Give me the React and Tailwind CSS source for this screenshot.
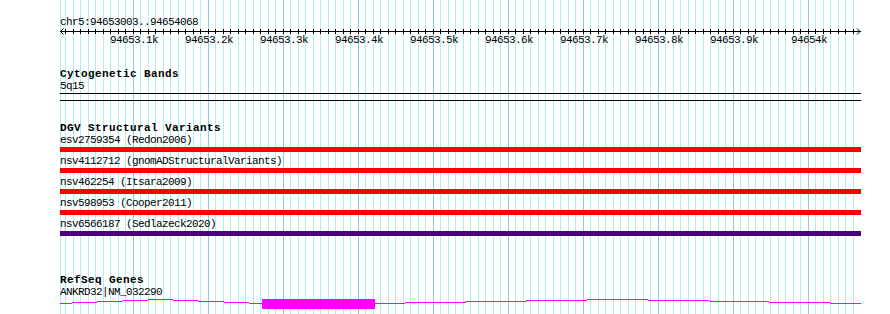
import React from 'react';

const START = 94653003;
const END = 94654068;
const LEFT = 60;
const WIDTH = 801;
const toX = bp => Math.round(LEFT + (bp - START) * 0.75);

const gridLines = [];
for (let bp = 94653010; bp <= 94654060; bp += 10) {
    gridLines.push({ x: toX(bp), major: bp % 100 === 0 });
}

const majorLabels = [
    { bp: 94653100, text: '94653.1k' },
    { bp: 94653200, text: '94653.2k' },
    { bp: 94653300, text: '94653.3k' },
    { bp: 94653400, text: '94653.4k' },
    { bp: 94653500, text: '94653.5k' },
    { bp: 94653600, text: '94653.6k' },
    { bp: 94653700, text: '94653.7k' },
    { bp: 94653800, text: '94653.8k' },
    { bp: 94653900, text: '94653.9k' },
    { bp: 94654000, text: '94654k' },
];

const variants = [
    { label: 'esv2759354 (Redon2006)', color: 'bg-[#ff0000]' },
    { label: 'nsv4112712 (gnomADStructuralVariants)', color: 'bg-[#ff0000]' },
    { label: 'nsv462254 (Itsara2009)', color: 'bg-[#ff0000]' },
    { label: 'nsv598953 (Cooper2011)', color: 'bg-[#ff0000]' },
    { label: 'nsv6566187 (Sedlazeck2020)', color: 'bg-[#4b0082]' },
];

// intron "hat" steps, absolute x / y
const introns = [
    [[60, 303], [72, 302], [97, 301], [123, 300], [148, 299], [173, 300], [198, 301], [224, 302], [249, 303], [262, 303]],
    [[375, 303], [405, 302], [466, 301], [526, 300], [587, 299], [648, 300], [709, 301], [769, 302], [830, 303], [861, 303]],
];

function stepPath(pts, top) {
    let d = '';
    for (let i = 0; i < pts.length - 1; i++) {
        const [x1, y] = pts[i];
        const [x2] = pts[i + 1];
        d += `M${x1 - LEFT} ${y - top + 0.5}H${x2 - LEFT}`;
    }
    return d;
}

function Grid() {
    return (
        <svg className="absolute inset-0" width="890" height="314" shapeRendering="crispEdges">
            <line x1="60.5" y1="0" x2="60.5" y2="314" stroke="#afeeee" />
            {gridLines.map(g => (
                <line key={g.x} x1={g.x + 0.5} y1="0" x2={g.x + 0.5} y2="314" stroke={g.major ? '#87cdea' : '#afeeee'} />
            ))}
        </svg>
    );
}

function Ruler() {
    return (
        <div>
            <div className="h-[12px] leading-[12px] text-[11px] tracking-[-0.6px]">chr5:94653003..94654068</div>
            <svg width={WIDTH} height="6" className="mt-[0px] block overflow-visible" shapeRendering="crispEdges">
                <line x1="0" y1="3.5" x2={WIDTH} y2="3.5" stroke="#000" />
                {gridLines.map(g => (
                    <line key={g.x} x1={g.x - LEFT + 0.5} y1="1" x2={g.x - LEFT + 0.5} y2="6" stroke="#000" />
                ))}
                <path d="M3.5 0.5L0.5 3.5L3.5 6.5" fill="none" stroke="#000" shapeRendering="auto" />
                <path d={`M${WIDTH - 4} 0.5L${WIDTH - 1} 3.5L${WIDTH - 4} 6.5`} fill="none" stroke="#000" shapeRendering="auto" />
            </svg>
            <div className="relative h-[12px] leading-[12px] text-[11px] tracking-[-0.6px]">
                {majorLabels.map(l => (
                    <span key={l.bp} className="absolute top-0 -translate-x-1/2 whitespace-nowrap" style={{ left: toX(l.bp) - LEFT + 1 }}>
                        {l.text}
                    </span>
                ))}
            </div>
        </div>
    );
}

function TrackTitle({ children, className = '' }) {
    return <div className={`h-[12px] leading-[12px] text-[11px] font-bold tracking-[0.4px] ${className}`}>{children}</div>;
}

function Label({ children }) {
    return <div className="h-[12px] leading-[12px] text-[11px] tracking-[-0.6px] whitespace-nowrap">{children}</div>;
}

export default function App() {
    return (
        <div className="relative w-[890px] h-[314px] overflow-hidden bg-white text-black font-['Liberation_Mono',monospace]">
            <Grid />
            <div className="relative flex flex-col pl-[60px] pt-[16px] w-[861px]">
                <Ruler />

                <TrackTitle className="mt-[22px]">Cytogenetic Bands</TrackTitle>
                <Label>5q15</Label>
                <div className="mt-px h-[8px] border-y border-black" />

                <TrackTitle className="mt-[21px]">DGV Structural Variants</TrackTitle>
                <div className="flex flex-col">
                    {variants.map((v, i) => (
                        <div key={v.label} className={i === 0 ? '' : 'mt-[3px]'}>
                            <Label>{v.label}</Label>
                            <div className={`mt-px h-[5px] ${v.color}`} />
                        </div>
                    ))}
                </div>

                <TrackTitle className="mt-[38px]">RefSeq Genes</TrackTitle>
                <Label>ANKRD32|NM_032290</Label>
                <svg width={WIDTH} height="12" className="block" shapeRendering="crispEdges">
                    {introns.map((pts, i) => (
                        <path key={i} d={stepPath(pts, 298)} stroke="#ff00ff" fill="none" />
                    ))}
                    <rect x={262 - LEFT} y={299 - 298} width={375 - 262} height="10" fill="#ff00ff" />
                </svg>
            </div>
        </div>
    );
}
